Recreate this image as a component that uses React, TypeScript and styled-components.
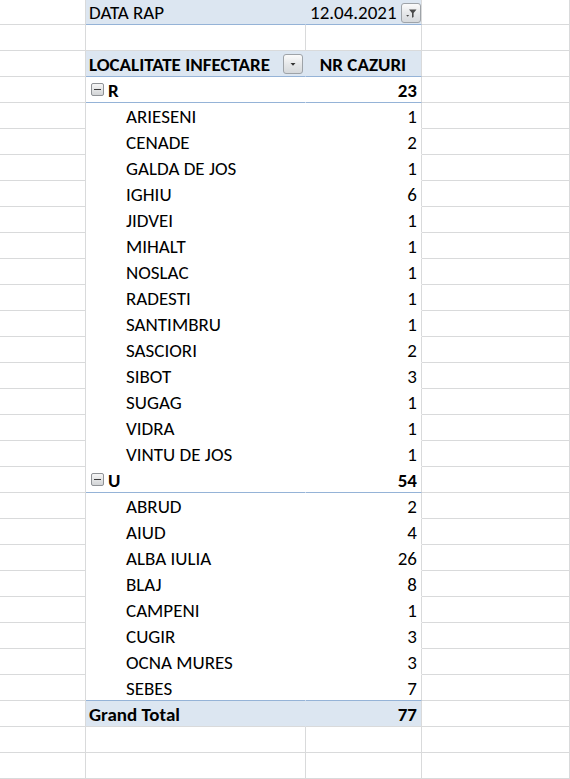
import React from "react";
import styled, { createGlobalStyle } from "styled-components";

const GRID = "#d9dadb";
const BLUE_FILL = "#dce6f1";
const BLUE_LINE = "#95b3d7";

const Global = createGlobalStyle`
  html, body { margin: 0; padding: 0; background: #ffffff; }
  body {
    font-family: "Carlito", "Lato", "Liberation Sans", sans-serif;
    font-size: 19px;
    color: #000;
  }
`;

const Sheet = styled.div`
  width: 570px;
  height: 779px;
  overflow: hidden;
  display: flex;
  flex-direction: column;
  background: #fff;
`;

const Row = styled.div<{ $first?: boolean }>`
  display: flex;
  flex: none;
  height: ${(p) => (p.$first ? 25 : 26)}px;
`;

const Cell = styled.div<{
  $w: number;
  $fill?: boolean;
  $bottom?: "grid" | "blue" | "none";
  $right?: "grid" | "none";
  $align?: "left" | "right" | "center";
  $bold?: boolean;
  $pl?: number;
  $pr?: number;
}>`
  box-sizing: border-box;
  flex: none;
  width: ${(p) => p.$w}px;
  height: 100%;
  display: flex;
  align-items: center;
  gap: 4px;
  padding-left: ${(p) => p.$pl ?? 3}px;
  padding-right: ${(p) => p.$pr ?? 4}px;
  padding-top: 1px;
  line-height: 1;
  justify-content: ${(p) =>
    p.$align === "right" ? "flex-end" : p.$align === "center" ? "center" : "flex-start"};
  background: ${(p) => (p.$fill ? BLUE_FILL : "#fff")};
  font-weight: ${(p) => (p.$bold ? 700 : 400)};
  white-space: nowrap;
  border-bottom: 1px solid
    ${(p) =>
      p.$bottom === "blue" ? BLUE_LINE : p.$bottom === "none" ? (p.$fill ? BLUE_FILL : "#fff") : GRID};
  border-right: 1px solid
    ${(p) => (p.$right === "none" ? (p.$fill ? BLUE_FILL : "#fff") : GRID)};
`;

const Spacer = styled.span`
  flex: 1;
`;

const ToolButton = styled.span`
  box-sizing: border-box;
  flex: none;
  width: 20px;
  height: 20px;
  border: 1px solid #9ea3a8;
  border-radius: 3px;
  background: linear-gradient(#fbfbfb, #e4e6e8 55%, #d6d9dc);
  display: flex;
  align-items: center;
  justify-content: center;
`;

const ToggleBox = styled.span`
  box-sizing: border-box;
  flex: none;
  width: 13px;
  height: 13px;
  border: 1px solid #8f9296;
  border-radius: 2px;
  background: linear-gradient(#f6f6f6, #d2d4d6);
  display: flex;
  align-items: center;
  justify-content: center;
  margin-top: -1px;
  &::after {
    content: "";
    width: 7px;
    height: 1px;
    background: #3a3a3a;
  }
`;

const FilterIcon = () => (
  <svg width="14" height="14" viewBox="0 0 14 14">
    <path d="M5 3.5 L12.5 3.5 L9.6 7 L9.6 11 L8 11.8 L8 7 Z" fill="#4a4a4a" />
    <path d="M2.2 9 L5.2 9 L3.7 10.8 Z" fill="#4a4a4a" />
  </svg>
);

const DropIcon = () => (
  <svg width="10" height="10" viewBox="0 0 10 10">
    <path d="M2.5 4 L7.5 4 L5 6.8 Z" fill="#333" />
  </svg>
);

const W = [86, 220, 116, 148];

type Item = { name: string; n: number };
const groups: { key: string; total: number; items: Item[] }[] = [
  {
    key: "R",
    total: 23,
    items: [
      { name: "ARIESENI", n: 1 },
      { name: "CENADE", n: 2 },
      { name: "GALDA DE JOS", n: 1 },
      { name: "IGHIU", n: 6 },
      { name: "JIDVEI", n: 1 },
      { name: "MIHALT", n: 1 },
      { name: "NOSLAC", n: 1 },
      { name: "RADESTI", n: 1 },
      { name: "SANTIMBRU", n: 1 },
      { name: "SASCIORI", n: 2 },
      { name: "SIBOT", n: 3 },
      { name: "SUGAG", n: 1 },
      { name: "VIDRA", n: 1 },
      { name: "VINTU DE JOS", n: 1 },
    ],
  },
  {
    key: "U",
    total: 54,
    items: [
      { name: "ABRUD", n: 2 },
      { name: "AIUD", n: 4 },
      { name: "ALBA IULIA", n: 26 },
      { name: "BLAJ", n: 8 },
      { name: "CAMPENI", n: 1 },
      { name: "CUGIR", n: 3 },
      { name: "OCNA MURES", n: 3 },
      { name: "SEBES", n: 7 },
    ],
  },
];

const Edge = ({ kind }: { kind: "a" | "d" }) => <Cell $w={kind === "a" ? W[0] : W[3]} />;

export default function App() {
  const rows: React.ReactNode[] = [];

  rows.push(
    <Row key="filter" $first>
      <Edge kind="a" />
      <Cell $w={W[1]} $fill $bottom="blue" $right="none">
        DATA RAP
      </Cell>
      <Cell $w={W[2]} $fill $bottom="blue" $pl={0} $pr={1}>
        <Spacer />
        12.04.2021
        <ToolButton>
          <FilterIcon />
        </ToolButton>
      </Cell>
      <Edge kind="d" />
    </Row>
  );

  rows.push(
    <Row key="blank">
      <Edge kind="a" />
      <Cell $w={W[1]} />
      <Cell $w={W[2]} />
      <Edge kind="d" />
    </Row>
  );

  rows.push(
    <Row key="header">
      <Edge kind="a" />
      <Cell $w={W[1]} $fill $bold $bottom="blue" $right="none" $pr={2}>
        LOCALITATE INFECTARE
        <Spacer />
        <ToolButton>
          <DropIcon />
        </ToolButton>
      </Cell>
      <Cell $w={W[2]} $fill $bold $bottom="blue" $align="center">
        NR CAZURI
      </Cell>
      <Edge kind="d" />
    </Row>
  );

  groups.forEach((g, gi) => {
    rows.push(
      <Row key={g.key}>
        <Edge kind="a" />
        <Cell $w={W[1]} $bold $bottom="blue" $right="none" $pl={5}>
          <ToggleBox />
          {g.key}
        </Cell>
        <Cell $w={W[2]} $bold $bottom="blue" $align="right">
          {g.total}
        </Cell>
        <Edge kind="d" />
      </Row>
    );
    g.items.forEach((it, ii) => {
      const lastOverall = gi === groups.length - 1 && ii === g.items.length - 1;
      const b = lastOverall ? "blue" : "none";
      rows.push(
        <Row key={g.key + it.name}>
          <Edge kind="a" />
          <Cell $w={W[1]} $bottom={b} $right="none" $pl={40}>
            {it.name}
          </Cell>
          <Cell $w={W[2]} $bottom={b} $align="right">
            {it.n}
          </Cell>
          <Edge kind="d" />
        </Row>
      );
    });
  });

  rows.push(
    <Row key="total">
      <Edge kind="a" />
      <Cell $w={W[1]} $fill $bold $right="none">
        Grand Total
      </Cell>
      <Cell $w={W[2]} $fill $bold $align="right">
        77
      </Cell>
      <Edge kind="d" />
    </Row>
  );

  for (let i = 0; i < 3; i++) {
    rows.push(
      <Row key={"e" + i}>
        <Edge kind="a" />
        <Cell $w={W[1]} />
        <Cell $w={W[2]} />
        <Edge kind="d" />
      </Row>
    );
  }

  return (
    <>
      <Global />
      <Sheet>{rows}</Sheet>
    </>
  );
}
